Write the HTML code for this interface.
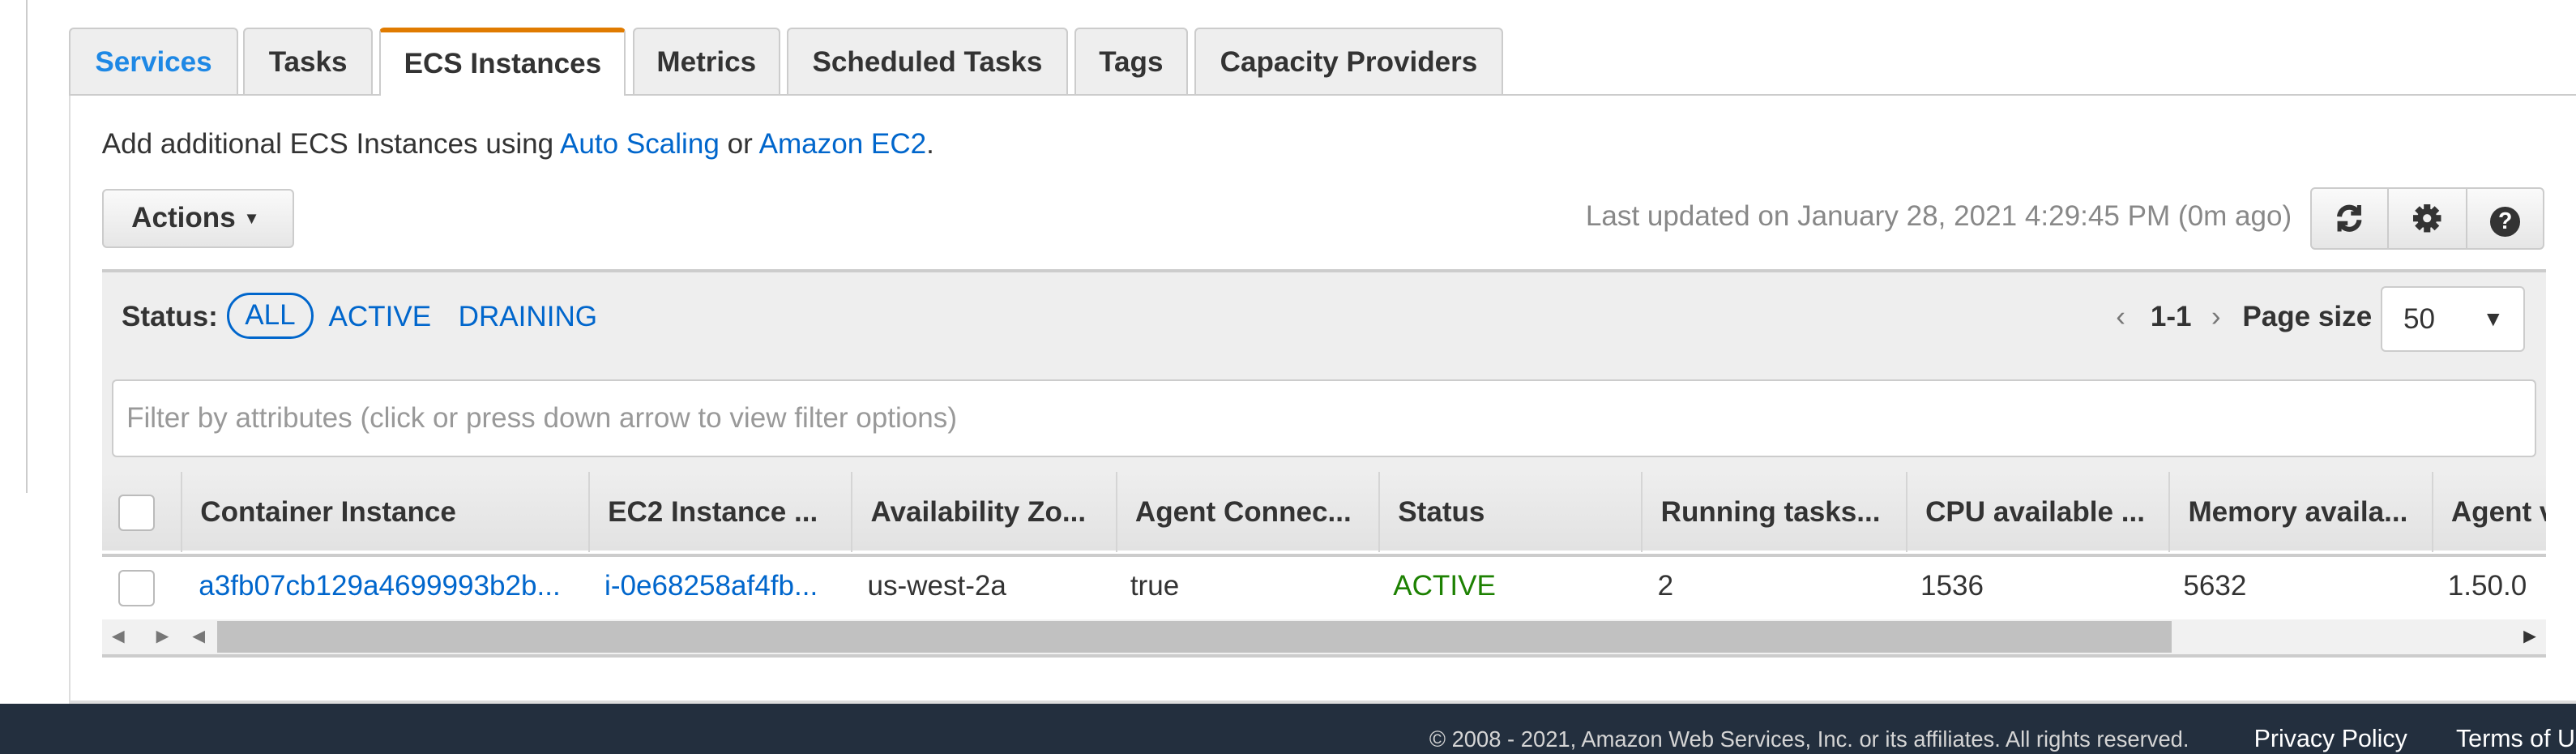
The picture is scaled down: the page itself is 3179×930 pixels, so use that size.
<!DOCTYPE html>
<html><head><meta charset="utf-8"><style>
*{box-sizing:border-box;margin:0;padding:0}
html,body{width:3179px;height:930px;overflow:hidden;background:#fff}
#r{zoom:2.0274;width:1568px;height:459px;position:relative;font-family:"Liberation Sans",Arial,sans-serif;color:#333;font-size:17.3px}
.a{position:absolute}
.tab{position:absolute;top:17px;height:40px;background:#eee;border:1px solid #ccc;border-bottom:none;border-radius:3px 3px 0 0;font-weight:bold;font-size:17.3px;line-height:40px;text-align:center;color:#333;white-space:nowrap}
.lnk{color:#0066cc}
.col{position:absolute;top:0;height:49px;border-left:1px solid #d5d5d5;padding-left:11px;line-height:49px;font-weight:bold;white-space:nowrap;overflow:hidden}
.cell{position:absolute;top:0;height:38px;line-height:36px;padding-left:9px;white-space:nowrap}
.cb{position:absolute;width:22px;height:22px;border:1px solid #bbb;border-radius:3px;background:#fff}
</style></head><body><div id="r">
<div class="a" style="left:16px;top:0;width:1px;height:300px;background:#ccc"></div>
<div class="a" style="left:42px;top:57px;width:1px;height:370px;background:#ddd"></div>
<div class="tab" style="left:42px;width:103px;color:#1e88e5">Services</div>
<div class="tab" style="left:148px;width:79px">Tasks</div>
<div class="tab" style="left:231px;width:150px;background:#fff;border-top:3px solid #e07b00;line-height:38px;height:41px;z-index:2">ECS Instances</div>
<div class="tab" style="left:385px;width:90px">Metrics</div>
<div class="tab" style="left:479px;width:171px">Scheduled Tasks</div>
<div class="tab" style="left:654px;width:69px">Tags</div>
<div class="tab" style="left:727px;width:188px">Capacity Providers</div>
<div class="a" style="left:42px;top:57px;width:1526px;height:1px;background:#ccc"></div>
<div class="a" style="left:62px;top:78px">Add additional ECS Instances using <span class="lnk">Auto Scaling</span> or <span class="lnk">Amazon EC2</span>.</div>
<div class="a" style="left:62px;top:115px;width:117px;height:36px;border:1px solid #ccc;border-radius:3px;background:linear-gradient(#fafafa,#e6e6e6);font-weight:bold;line-height:34px;padding-left:17px">Actions <span style="font-size:10px;vertical-align:2px">▼</span></div>
<div class="a" style="right:173px;top:122px;color:#888">Last updated on January 28, 2021 4:29:45 PM (0m ago)</div>
<div class="a" style="left:1406px;top:114px;width:143px;height:38px;border:1px solid #ccc;border-radius:3px;background:linear-gradient(#fafafa,#e6e6e6);display:flex">
<div style="width:47px;border-right:1px solid #ccc;display:flex;align-items:center;justify-content:center"><svg width="18" height="18" viewBox="0 0 18 18" fill="none" stroke="#333" stroke-width="3"><path d="M3 8a6 6 0 0 1 11-3"/><path d="M15 10a6 6 0 0 1-11 3"/><path d="M15 1v5h-5" stroke-width="2.5"/><path d="M3 17v-5h5" stroke-width="2.5"/></svg></div>
<div style="width:48px;border-right:1px solid #ccc;display:flex;align-items:center;justify-content:center"><svg width="18" height="18" viewBox="0 0 18 18"><g fill="#333"><circle cx="9" cy="9" r="6"/><rect x="7" y="0.5" width="4" height="17"/><rect x="0.5" y="7" width="17" height="4"/><rect x="7" y="0.5" width="4" height="17" transform="rotate(45 9 9)"/><rect x="7" y="0.5" width="4" height="17" transform="rotate(-45 9 9)"/></g><circle cx="9" cy="9" r="2.5" fill="#eee"/></svg></div>
<div style="width:46px;text-align:center;padding-top:9px"><span style="display:inline-block;width:18px;height:18px;border-radius:50%;background:#333;color:#fff;font-size:14px;font-weight:bold;line-height:18px">?</span></div></div>
<div class="a" style="left:62px;top:164px;width:1488px;height:236px;background:#eee;border-top:2px solid #ccc;border-bottom:2px solid #ccc">
<div class="a" style="left:12px;top:17px;font-weight:bold">Status:</div>
<div class="a" style="left:76px;top:12px;width:53px;height:28px;border:1.5px solid #0066cc;border-radius:14px;color:#0066cc;text-align:center;line-height:25px">ALL</div>
<div class="a lnk" style="left:138px;top:17px">ACTIVE</div>
<div class="a lnk" style="left:217px;top:17px">DRAINING</div>
<div class="a" style="left:1226px;top:17px;color:#777">‹</div>
<div class="a" style="left:1247px;top:17px;font-weight:bold">1-1</div>
<div class="a" style="left:1284px;top:17px;color:#777">›</div>
<div class="a" style="left:1303px;top:17px;font-weight:bold">Page size</div>
<div class="a" style="left:1387px;top:8px;width:88px;height:40px;background:#fff;border:1px solid #ccc;border-radius:3px;line-height:38px;padding-left:13px">50<span style="position:absolute;right:12px;font-size:13px">▼</span></div>
<div class="a" style="left:6px;top:65px;width:1476px;height:47px;background:#fff;border:1px solid #ccc;border-radius:3px;line-height:45px;padding-left:8px;color:#999">Filter by attributes (click or press down arrow to view filter options)</div>
<div class="a" style="left:0;top:121px;width:1488px;height:50px;background:linear-gradient(#eee,#e2e2e2);border-bottom:2px solid #fff">
<div class="cb" style="left:10px;top:14px"></div>
<div class="col" style="left:48px;width:248px">Container Instance</div>
<div class="col" style="left:296px;width:160px">EC2 Instance ...</div>
<div class="col" style="left:456px;width:161px">Availability Zo...</div>
<div class="col" style="left:617px;width:160px">Agent Connec...</div>
<div class="col" style="left:777px;width:160px">Status</div>
<div class="col" style="left:937px;width:161px">Running tasks...</div>
<div class="col" style="left:1098px;width:160px">CPU available ...</div>
<div class="col" style="left:1258px;width:160px">Memory availa...</div>
<div class="col" style="left:1418px;width:70px">Agent v</div></div>
<div class="a" style="left:0;top:171px;width:1488px;height:40px;background:#fff;border-top:2px solid #ccc">
<div class="cb" style="left:10px;top:8px"></div>
<div class="cell lnk" style="left:50px">a3fb07cb129a4699993b2b...</div>
<div class="cell lnk" style="left:297px">i-0e68258af4fb...</div>
<div class="cell" style="left:457px">us-west-2a</div>
<div class="cell" style="left:617px">true</div>
<div class="cell" style="left:777px;color:#1d8102">ACTIVE</div>
<div class="cell" style="left:938px">2</div>
<div class="cell" style="left:1098px">1536</div>
<div class="cell" style="left:1258px">5632</div>
<div class="cell" style="left:1419px">1.50.0</div></div>
<div class="a" style="left:0;top:211px;width:1488px;height:21px;background:#f1f1f1;font-size:10px;color:#777">
<span class="a" style="left:6px;top:4px">◀</span><span class="a" style="left:33px;top:4px">▶</span><span class="a" style="left:55px;top:4px">◀</span>
<div class="a" style="left:70px;top:1px;width:1190px;height:19px;background:#c1c1c1"></div>
<span class="a" style="left:1474px;top:4px;color:#333">▶</span></div>
</div>
<div class="a" style="left:42px;top:426px;width:1526px;height:2px;background:#ddd"></div>
<div class="a" style="left:0;top:428px;width:1568px;height:31px;background:#232f3e;color:#d5d5d5;font-size:13.5px">
<span class="a" style="left:870px;top:14px">© 2008 - 2021, Amazon Web Services, Inc. or its affiliates. All rights reserved.</span>
<span class="a" style="left:1372px;top:13px;font-size:15px;color:#fff">Privacy Policy</span>
<span class="a" style="left:1495px;top:13px;font-size:15px;color:#fff;white-space:nowrap">Terms of Use</span></div>
</div></body></html>
